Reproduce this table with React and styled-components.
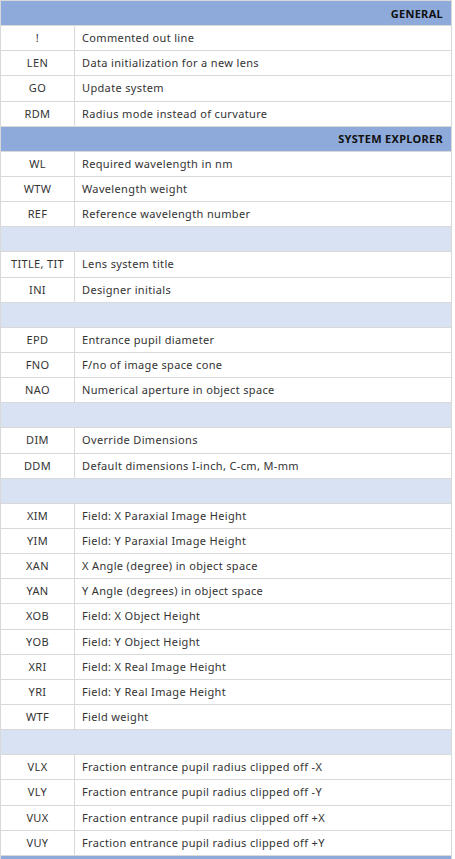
import React from 'react';
import styled, { createGlobalStyle } from 'styled-components';

const GlobalStyle = createGlobalStyle`
  html, body {
    margin: 0;
    padding: 0;
    background: #ffffff;
  }
`;

const Table = styled.table`
  width: 452px;
  border-collapse: collapse;
  table-layout: fixed;
  font-family: 'Noto Sans', 'Noto Sans CJK KR', sans-serif;
  font-size: 11px;
  color: #333333;
`;

const Row = styled.tr`
  height: 25.15px;
`;

const Cell = styled.td`
  border: 1px solid #d9d9d9;
  padding: 0 7px;
  line-height: 14px;
  letter-spacing: 0.35px;
  text-align: ${(p) => (p.$center ? 'center' : 'left')};
  white-space: nowrap;
`;

const HeaderCell = styled.td`
  background: #8eaadb;
  border: 1px solid #d9d9d9;
  padding: 0 8px;
  text-align: right;
  font-weight: 700;
  font-size: 11px;
  letter-spacing: 0.3px;
  color: #111111;
`;

const BlankCell = styled.td`
  background: #d9e2f3;
  border: 1px solid #d9d9d9;
`;

const rows = [
  { h: 'GENERAL' },
  ['!', 'Commented out line'],
  ['LEN', 'Data initialization for a new lens'],
  ['GO', 'Update system'],
  ['RDM', 'Radius mode instead of curvature'],
  { h: 'SYSTEM EXPLORER' },
  ['WL', 'Required wavelength in nm'],
  ['WTW', 'Wavelength weight'],
  ['REF', 'Reference wavelength number'],
  null,
  ['TITLE, TIT', 'Lens system title'],
  ['INI', 'Designer initials'],
  null,
  ['EPD', 'Entrance pupil diameter'],
  ['FNO', 'F/no of image space cone'],
  ['NAO', 'Numerical aperture in object space'],
  null,
  ['DIM', 'Override Dimensions'],
  ['DDM', 'Default dimensions I-inch, C-cm, M-mm'],
  null,
  ['XIM', 'Field: X Paraxial Image Height'],
  ['YIM', 'Field: Y Paraxial Image Height'],
  ['XAN', 'X Angle (degree) in object space'],
  ['YAN', 'Y Angle (degrees) in object space'],
  ['XOB', 'Field: X Object Height'],
  ['YOB', 'Field: Y Object Height'],
  ['XRI', 'Field: X Real Image Height'],
  ['YRI', 'Field: Y Real Image Height'],
  ['WTF', 'Field weight'],
  null,
  ['VLX', 'Fraction entrance pupil radius clipped off -X'],
  ['VLY', 'Fraction entrance pupil radius clipped off -Y'],
  ['VUX', 'Fraction entrance pupil radius clipped off +X'],
  ['VUY', 'Fraction entrance pupil radius clipped off +Y'],
  { h: '' },
];

export default function App() {
  return (
    <>
      <GlobalStyle />
      <Table>
        <colgroup>
          <col style={{ width: 74 }} />
          <col />
        </colgroup>
        <tbody>
          {rows.map((r, i) => {
            if (r === null) {
              return (
                <Row key={i}>
                  <BlankCell colSpan={2} />
                </Row>
              );
            }
            if (!Array.isArray(r)) {
              return (
                <Row key={i}>
                  <HeaderCell colSpan={2}>{r.h}</HeaderCell>
                </Row>
              );
            }
            return (
              <Row key={i}>
                <Cell $center>{r[0]}</Cell>
                <Cell>{r[1]}</Cell>
              </Row>
            );
          })}
        </tbody>
      </Table>
    </>
  );
}
